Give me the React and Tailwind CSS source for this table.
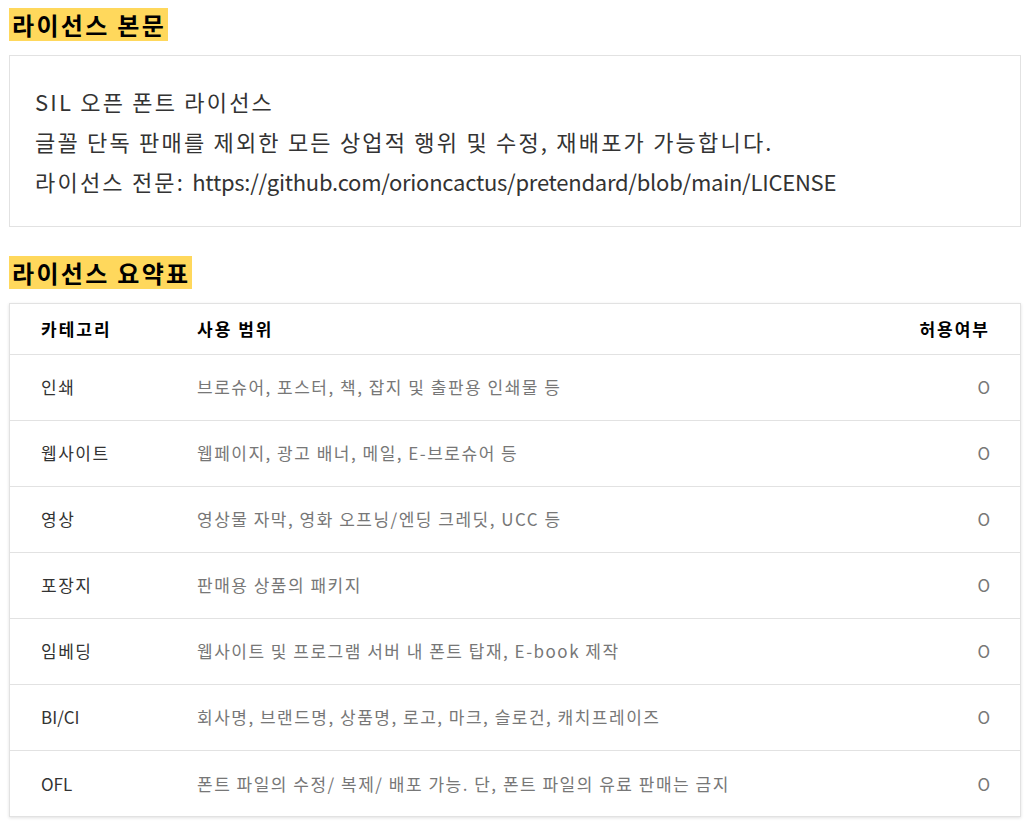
import React from 'react'

const rows = [
  { cat: "인쇄", desc: "브로슈어, 포스터, 책, 잡지 및 출판용 인쇄물 등" },
  { cat: "웹사이트", desc: "웹페이지, 광고 배너, 메일, E-브로슈어 등" },
  { cat: "영상", desc: "영상물 자막, 영화 오프닝/엔딩 크레딧, UCC 등" },
  { cat: "포장지", desc: "판매용 상품의 패키지" },
  { cat: "임베딩", desc: "웹사이트 및 프로그램 서버 내 폰트 탑재, E-book 제작" },
  { cat: "BI/CI", latin: true, desc: "회사명, 브랜드명, 상품명, 로고, 마크, 슬로건, 캐치프레이즈" },
  { cat: "OFL", latin: true, desc: "폰트 파일의 수정/ 복제/ 배포 가능. 단, 폰트 파일의 유료 판매는 금지" },
];

const App = () => {
  return (
    <div className="min-h-screen bg-white pl-[9px] pr-[6px] pt-[8px] text-[#333] font-['Noto_Sans_CJK_KR','Noto_Sans',sans-serif]">

      {/* 본문 */}
      <h2 className="w-fit bg-[#ffd85c] pl-[3px] pr-[2px] text-[24px] leading-[33px] tracking-[2.3px] font-bold text-black">
        라이선스 본문
      </h2>
      <div className="mt-[14px] border border-[#e2e2e2] px-[25px] py-[25px] text-[22px] leading-[40px] tracking-[2.2px] text-[#333]">
        <p>SIL 오픈 폰트 라이선스</p>
        <p>글꼴 단독 판매를 제외한 모든 상업적 행위 및 수정, 재배포가 가능합니다.</p>
        <p>
          라이선스 전문: <span className="tracking-[-0.25px]">https://github.com/orioncactus/pretendard/blob/main/LICENSE</span>
        </p>
      </div>

      {/* 요약표 */}
      <h2 className="mt-[29px] w-fit bg-[#ffd85c] pl-[3px] pr-[2px] text-[24px] leading-[33px] tracking-[2.3px] font-bold text-black">
        라이선스 요약표
      </h2>
      <div className="mt-[14px] border border-[#e2e2e2] shadow-[0_1px_3px_rgba(0,0,0,0.12)]">
        <table className="w-full border-collapse">
          <thead>
            <tr className="h-[50px] border-b border-[#e2e2e2]">
              <th className="w-[187px] pl-[31px] text-left text-[17px] tracking-[2px] font-bold text-black">카테고리</th>
              <th className="text-left text-[17px] tracking-[2px] font-bold text-black">사용 범위</th>
              <th className="pr-[30px] text-right text-[17px] tracking-[2px] font-bold text-black">허용여부</th>
            </tr>
          </thead>
          <tbody>
            {rows.map((r, i) => (
              <tr key={i} className={"h-[66px] " + (i < rows.length - 1 ? "border-b border-[#e2e2e2]" : "")}>
                <td className={"pl-[31px] text-[17px] text-[#333] " + (r.latin ? "tracking-normal" : "tracking-[1.5px]")}>{r.cat}</td>
                <td className="text-[17px] tracking-[1.5px] text-[#777]">{r.desc}</td>
                <td className="pr-[30px] text-right text-[17px] text-[#777]">O</td>
              </tr>
            ))}
          </tbody>
        </table>
      </div>

    </div>
  );
};

export default App;
